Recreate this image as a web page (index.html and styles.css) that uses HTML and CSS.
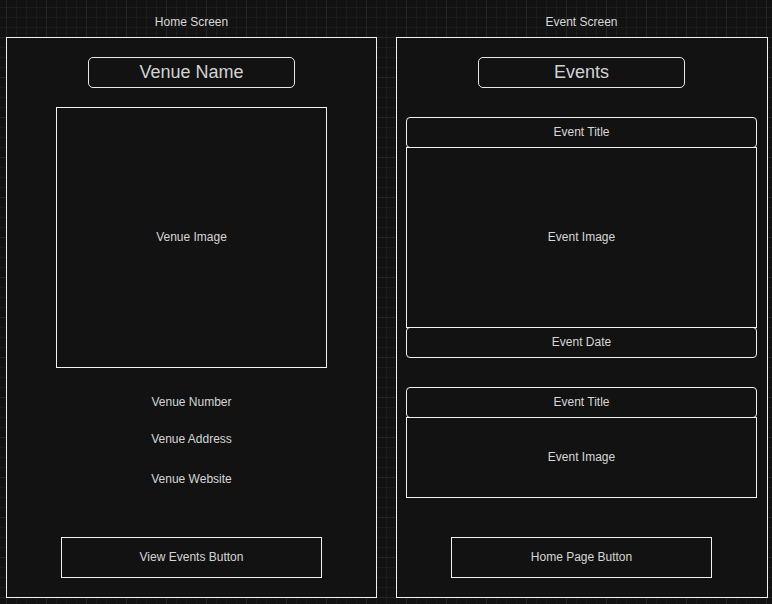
FILE: index.html
```html
<!DOCTYPE html>
<html>
<head>
<meta charset="utf-8">
<link rel="stylesheet" href="styles.css">
</head>
<body>
<div class="canvas">
  <section class="screen home">
    <div class="label">Home Screen</div>
    <div class="frame">
      <div class="heading">Venue Name</div>
      <div class="venue-image">Venue Image</div>
      <div class="info info-number">Venue Number</div>
      <div class="info info-address">Venue Address</div>
      <div class="info info-website">Venue Website</div>
      <div class="button">View Events Button</div>
    </div>
  </section>
  <section class="screen events">
    <div class="label">Event Screen</div>
    <div class="frame">
      <div class="heading">Events</div>
      <div class="card card-first">
        <div class="pill">Event Title</div>
        <div class="event-image tall">Event Image</div>
        <div class="pill">Event Date</div>
      </div>
      <div class="card card-second">
        <div class="pill">Event Title</div>
        <div class="event-image short">Event Image</div>
      </div>
      <div class="button">Home Page Button</div>
    </div>
  </section>
</div>
</body>
</html>
```

FILE: styles.css
```css
html, body {
  margin: 0;
  padding: 0;
}
body {
  width: 772px;
  height: 604px;
  overflow: hidden;
  background-color: #121212;
  background-image:
    linear-gradient(to right, #262626 1px, transparent 1px),
    linear-gradient(to bottom, #262626 1px, transparent 1px),
    linear-gradient(to right, #1b1b1b 1px, transparent 1px),
    linear-gradient(to bottom, #1b1b1b 1px, transparent 1px);
  background-size: 40px 40px, 40px 40px, 10px 10px, 10px 10px;
  background-position: 6px -3px, 6px -3px, 6px -3px, 6px -3px;
  font-family: "Liberation Sans", Arial, sans-serif;
  font-size: 12px;
  color: #d6d6d6;
}
.canvas {
  display: flex;
  gap: 19px;
  padding-left: 6px;
}
.screen {
  display: flex;
  flex-direction: column;
}
.label {
  width: 371px;
  height: 37px;
  line-height: 44px;
  text-align: center;
  color: #d8d8d8;
}
.frame {
  box-sizing: border-box;
  height: 561px;
  border: 1px solid #f2f2f2;
  background: #121212;
  display: flex;
  flex-direction: column;
  align-items: flex-start;
}
.home .frame { width: 371px; }
.events .frame { width: 372px; }

.heading {
  box-sizing: border-box;
  width: 207px;
  height: 31px;
  margin: 19px 0 0 81px;
  border: 1px solid #e8e8e8;
  border-radius: 5px;
  font-size: 18px;
  line-height: 28px;
  text-align: center;
  color: #d2d2d2;
}
.venue-image {
  box-sizing: border-box;
  width: 271px;
  height: 261px;
  margin: 19px 0 0 49px;
  padding-bottom: 2px;
  border: 1px solid #f2f2f2;
  display: flex;
  align-items: center;
  justify-content: center;
}
.info {
  width: 369px;
  height: 20px;
  line-height: 20px;
  text-align: center;
}
.info-number { margin-top: 24px; }
.info-address { margin-top: 17px; }
.info-website { margin-top: 20px; }
.button {
  box-sizing: border-box;
  width: 261px;
  height: 41px;
  border: 1px solid #f2f2f2;
  margin-left: 54px;
  padding-bottom: 1px;
  display: flex;
  align-items: center;
  justify-content: center;
}
.home .button { margin-top: 48px; }

.card {
  display: flex;
  flex-direction: column;
  margin-left: 9px;
  width: 351px;
}
.card-first { margin-top: 29px; }
.card-second { margin-top: 29px; }
.pill {
  box-sizing: border-box;
  height: 31px;
  border: 1px solid #f2f2f2;
  border-radius: 4px;
  line-height: 28px;
  text-align: center;
}
.event-image {
  box-sizing: border-box;
  border: 1px solid #f2f2f2;
  margin: -1px 0;
  display: flex;
  align-items: center;
  justify-content: center;
}
.event-image.tall { height: 181px; padding-bottom: 2px; }
.event-image.short { height: 81px; margin-bottom: 0; padding-bottom: 2px; }
.events .button { margin-top: 39px; }
```
